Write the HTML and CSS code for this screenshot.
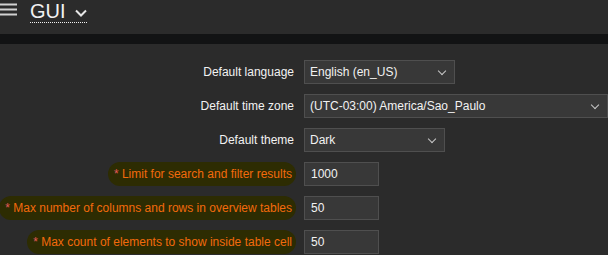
FILE: index.html
```html
<!DOCTYPE html>
<html lang="en">
<head>
    <meta charset="UTF-8">
    <title>GUI</title>
    <link rel="stylesheet" href="styles.css">
</head>
<body>

    <header class="page-header">
        <span class="menu-icon">
            <svg width="17" height="13" viewBox="0 0 17 13"><path d="M0 1.5h17M0 6.5h17M0 11.5h17" stroke="#d2d2d2" stroke-width="2"/></svg>
        </span>
        <span class="page-title">GUI
            <svg class="title-caret" width="12" height="8" viewBox="0 0 12 8"><path d="M1 1.5l5 5 5-5" fill="none" stroke="#e6e6e6" stroke-width="2"/></svg>
        </span>
    </header>
    <div class="band"></div>

    <form class="settings">
        <label class="label">Default language</label>
        <div class="field"><div class="select w-lang">English (en_US)<span class="arrow"></span></div></div>

        <label class="label">Default time zone</label>
        <div class="field"><div class="select w-tz">(UTC-03:00) America/Sao_Paulo<span class="arrow"></span></div></div>

        <label class="label">Default theme</label>
        <div class="field"><div class="select w-theme">Dark<span class="arrow"></span></div></div>

        <label class="label"><span class="mark m1"><span class="req">*</span> Limit for search and filter results</span></label>
        <div class="field"><input class="text" type="text" value="1000"></div>

        <label class="label"><span class="mark m2"><span class="req">*</span> Max number of columns and rows in overview tables</span></label>
        <div class="field"><input class="text" type="text" value="50"></div>

        <label class="label"><span class="mark m3"><span class="req">*</span> Max count of elements to show inside table cell</span></label>
        <div class="field"><input class="text" type="text" value="50"></div>
    </form>

</body>
</html>
```

FILE: styles.css
```css
body {
    margin: 0;
    background: #2b2b2b;
    font-family: "Liberation Sans", Arial, sans-serif;
    font-size: 12px;
    color: #f2f2f2;
    height: 255px;
    overflow: hidden;
}

.page-header {
    height: 34px;
    display: flex;
    align-items: flex-start;
}

.menu-icon {
    width: 17px;
    padding-top: 3px;
    margin-right: 13px;
}

.page-title {
    display: inline-flex;
    align-items: center;
    font-size: 20px;
    line-height: 20px;
    color: #f2f2f2;
    padding-top: 1px;
    padding-bottom: 1px;
    border-bottom: 1px dotted #f2f2f2;
}

.title-caret {
    margin-left: 9px;
    margin-top: 3px;
}

.band {
    height: 10px;
    background: #121314;
}

.settings {
    display: grid;
    grid-template-columns: 294px 1fr;
    grid-auto-rows: 24px;
    row-gap: 10px;
    column-gap: 10px;
    padding-top: 16px;
}

.label {
    display: flex;
    align-items: center;
    justify-content: flex-end;
    white-space: nowrap;
}

.mark {
    color: #f26a0c;
    background: #2d2c02;
    border-radius: 12px;
    padding: 5px 4px 5px 6px;
    margin-right: -2px;
}

.m2 {
    margin-left: -14px;
    padding-left: 6px;
}

.req {
    color: #e45959;
}

.field {
    display: flex;
    align-items: center;
}

.select {
    position: relative;
    box-sizing: border-box;
    height: 24px;
    line-height: 22px;
    padding: 0 24px 0 5px;
    background: #383838;
    border: 1px solid #4f4f4f;
    color: #f2f2f2;
    font-size: 12px;
}

.w-lang { width: 151px; }
.w-tz { width: 304px; }
.w-theme { width: 141px; }

.arrow {
    position: absolute;
    right: 9px;
    top: 7px;
    width: 5px;
    height: 5px;
    border-right: 1px solid #c8c8c8;
    border-bottom: 1px solid #c8c8c8;
    transform: rotate(45deg);
}

.text {
    box-sizing: border-box;
    width: 75px;
    height: 24px;
    padding: 0 6px;
    background: #383838;
    border: 1px solid #4f4f4f;
    color: #f2f2f2;
    font-family: "Liberation Sans", Arial, sans-serif;
    font-size: 12px;
    outline: none;
}
```
